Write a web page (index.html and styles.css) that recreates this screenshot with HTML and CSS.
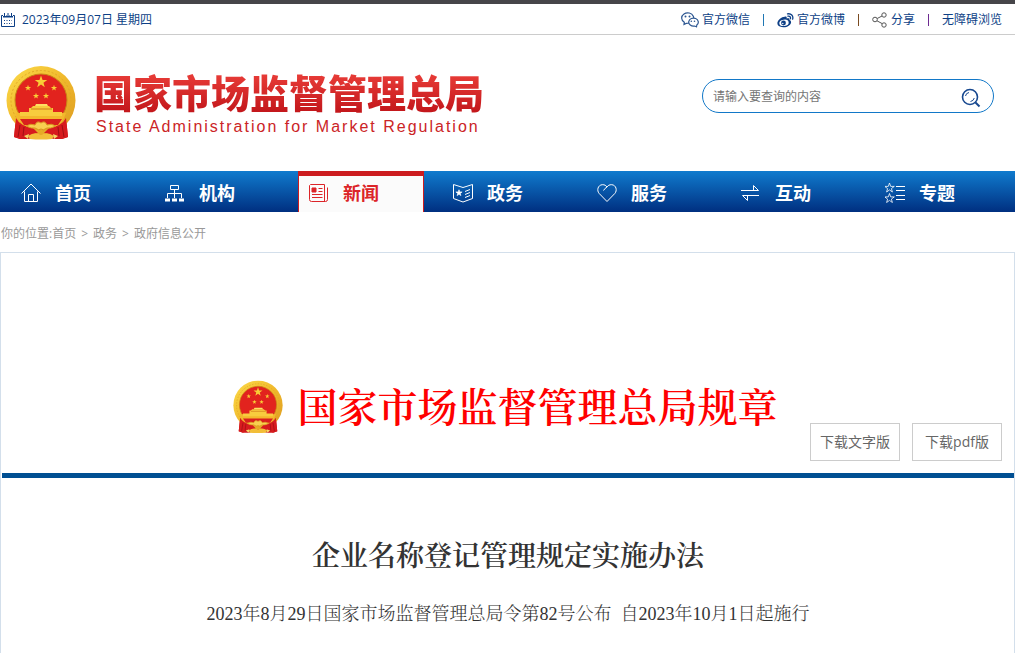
FILE: index.html
```html
<!DOCTYPE html>
<html lang="zh-CN">
<head>
    <meta charset="UTF-8">
    <meta name="viewport" content="width=device-width, initial-scale=1.0">
    <title>企业名称登记管理规定实施办法</title>
    <link rel="stylesheet" href="styles.css">
</head>
<body>
    <!-- shared emblem, used in the header and above the document -->
    <svg class="defs" width="0" height="0" aria-hidden="true">
        <defs>
            <linearGradient id="gold" x1="0" y1="0" x2="1" y2="1">
                <stop offset="0" stop-color="#fcdc4a"/>
                <stop offset="0.5" stop-color="#f0b92c"/>
                <stop offset="1" stop-color="#dc9a20"/>
            </linearGradient>
            <polygon id="star" points="0,-5 1.2,-1.6 4.8,-1.6 1.9,0.6 2.9,4 0,1.9 -2.9,4 -1.9,0.6 -4.8,-1.6 -1.2,-1.6"/>
            <symbol id="emblem" viewBox="0 0 70 74">
                <path d="M10 52 L8 71 L14 73 L22 73 L35 70 L48 73 L56 73 L62 71 L60 52Z" fill="#cf1a1c"/>
                <circle cx="35" cy="34.500" r="34.500" fill="url(#gold)"/>
                <circle cx="35" cy="34.500" r="30" fill="none" stroke="#e3a826" stroke-width="1" stroke-dasharray="2 2"/>
                <circle cx="35" cy="34" r="26" fill="#e2231e" stroke="#c98516" stroke-width="1"/>
                <path d="M10 47 H60 Q57 57 49 62 H21 Q13 57 10 47Z" fill="#f4b72d"/>
                <path d="M14 53 H56 L52 59 H18Z" fill="#d9201d"/>
                <path d="M23 46 V42 H25 L27 40 H43 L45 42 H47 V46 H56 V50 H14 V46Z" fill="#f8cc3e"/>
                <path d="M29 40 L30 38 H41 L42 40Z" fill="#ffdf62"/>
                <path d="M25 43 H46" stroke="#d07b1b" stroke-width="1"/>
                <use href="#star" transform="translate(35 16) scale(1.3)" fill="#f9cd36"/>
                <use href="#star" transform="translate(22 22) scale(.65)" fill="#f9cd36"/>
                <use href="#star" transform="translate(48 22) scale(.65)" fill="#f9cd36"/>
                <use href="#star" transform="translate(30 30) scale(.65)" fill="#f9cd36"/>
                <use href="#star" transform="translate(40 30) scale(.65)" fill="#f9cd36"/>
                <path d="M10 52 Q14 60 27 62 L32 67 L18 70 L14 73 L8 71Z" fill="#d71b1e"/>
                <path d="M60 52 Q56 60 43 62 L38 67 L52 70 L56 73 L62 71Z" fill="#d71b1e"/>
                <path d="M14 59 L12 71 M18 61 L17 70 M56 59 L58 71 M52 61 L53 70" stroke="#9e1014" stroke-width="1"/>
                <path d="M20 60 Q25 57 29 59 Q31 54 35 57 Q39 54 41 59 Q45 57 50 60 Q44 63 41 62 Q37 65 35 63 Q33 65 29 62 Q26 63 20 60Z" fill="#f8d050" stroke="#d99620" stroke-width="1"/>
                <path d="M22 70 Q29 65 35 69 Q41 65 48 70 L46 73 Q35 74 24 73Z" fill="#f2be38"/>
                <path d="M18 70 L23 68 L22 73Z M52 70 L47 68 L48 73Z" fill="#f6d667"/>
            </symbol>
        </defs>
    </svg>

    <div class="topbar">
        <div class="topbar-date">
            <svg width="14" height="14" viewBox="0 0 14 14" fill="none" stroke="#0d3f86">
                <path d="M.5 2.500H13.500V13.500H.5Z"/>
                <path d="M2 3.500H12" stroke-width="2"/>
                <path d="M3.500 0V3M7 0V3M10.500 0V3" stroke="#fff" stroke-width="3"/>
                <path d="M3.500 0V4M7 0V4M10.500 0V4"/>
                <path d="M3 7.500H11M3 10.500H11" stroke-dasharray="1 1.500"/>
            </svg>
            <span>2023年09月07日 星期四</span>
        </div>
        <div class="topbar-links">
            <a href="#">
                <svg width="18" height="16" viewBox="0 0 18 16" fill="#fff" stroke="#2c5691" stroke-width="1.200">
                    <path d="M3 12.500L3.300 10.300A6 5.200 0 1 1 7 11.200C5.500 11.200 4.500 11.700 3 12.500Z"/>
                    <path d="M15.500 14.800L13.500 14A4.800 4 0 1 1 15.800 13Z"/>
                    <g fill="#2c5691" stroke="none">
                        <circle cx="4.500" cy="4.500" r="1"/><circle cx="8.500" cy="4.500" r="1"/>
                        <circle cx="10.300" cy="9.300" r=".8"/><circle cx="13.500" cy="9.300" r=".8"/>
                    </g>
                </svg>
                <span>官方微信</span>
            </a>
            <span class="sep sep-blue"></span>
            <a href="#">
                <svg width="17" height="15" viewBox="0 0 17 15">
                    <path d="M6.500 4C8.700 2.800 10.200 3.400 9.600 5.400C12 4.700 13 5.500 12.300 7C14.500 7.700 14.600 9.800 13 11.700C10.800 14.200 6 15 3 13.600C-.4 12.200-.2 9 2 6.700C3.300 5.300 4.800 4.300 6.500 4Z" fill="#0d3f86"/>
                    <ellipse cx="7" cy="9.800" rx="4.700" ry="3.200" fill="#fff" transform="rotate(-8 7 9.800)"/>
                    <circle cx="6.500" cy="10" r="2.400" fill="#0d3f86"/>
                    <circle cx="5.800" cy="10.500" r=".7" fill="#fff"/>
                    <path d="M10.500.9C14 .1 16.700 3 15.600 6.200M10.900 3.200C12.800 2.900 13.900 4.200 13.400 5.800" fill="none" stroke="#0d3f86" stroke-width="1.300" stroke-linecap="round"/>
                </svg>
                <span>官方微博</span>
            </a>
            <span class="sep sep-brown"></span>
            <a href="#">
                <svg width="16" height="16" viewBox="0 0 16 16" fill="none" stroke="#555">
                    <circle cx="3" cy="7.500" r="2.300"/>
                    <circle cx="12" cy="3" r="2.200"/>
                    <circle cx="12" cy="13" r="2.200"/>
                    <path d="M5.200 6.500L10 4M5 8.800L10.300 11.700"/>
                </svg>
                <span>分享</span>
            </a>
            <span class="sep sep-purple"></span>
            <a href="#">无障碍浏览</a>
        </div>
    </div>

    <header class="header">
        <a class="logo" href="#">
            <svg class="logo-emblem" viewBox="0 0 70 74" aria-hidden="true"><use href="#emblem"/></svg>
            <span class="logo-text">
                <span class="logo-cn">国家市场监督管理总局</span>
                <span class="logo-en">State Administration for Market Regulation</span>
            </span>
        </a>
        <form class="search">
            <input type="text" aria-label="搜索" placeholder="请输入要查询的内容">
            <button type="button" aria-label="查询">
                <svg width="20" height="20" viewBox="0 0 20 20" fill="none" stroke="#17488f">
                    <circle cx="9" cy="9" r="7.500" stroke-width="1.600"/>
                    <path d="M14.500 14.500L18.500 18.500" stroke-width="2"/>
                    <path d="M4.500 8Q5 5 8 4.500M9.500 13.500Q12.500 13 13.300 10" stroke-width="1"/>
                </svg>
            </button>
        </form>
    </header>

    <nav class="nav">
        <a href="#">
            <svg viewBox="0 0 20 20"><path d="M.5 10.500L10 1L19.500 10.500M3.500 8.500V18.500H16.500V8.500M7.500 18V11.500H12.500V18"/></svg>
            <span>首页</span>
        </a>
        <a href="#">
            <svg viewBox="0 0 20 20"><path d="M5.500 2.500H13.500V6.500H5.500ZM9.500 6.500V10.500M2.500 15V10.500H16.500V15M9.500 10.500V15"/><path d="M0 17H5M7 17H12M14 17H19" stroke-width="3"/></svg>
            <span>机构</span>
        </a>
        <a class="active" href="#">
            <svg viewBox="0 0 20 20"><path d="M1.500 1.500H15.500V18.500H2.500Q.5 18.500 .5 16.500V2.500ZM18.500 4.500V16.500Q18.500 18.500 16.500 18.500H14M9.500 5.500H13.500M9.500 8.500H13.500M3 11.500H13.500M3 14.500H13.500"/><path d="M3 5H7V9H3Z" fill="currentColor"/></svg>
            <span>新闻</span>
        </a>
        <a href="#">
            <svg viewBox="0 0 20 20"><path d="M.5 1.500L10 4.500L19.500 1.500V15.500L10 19L.5 15.500ZM12 8.500L17 6.500M12 11.500L17 9.500M12 14.500L17 12.500"/><use href="#star" transform="translate(6 10) scale(.65)" fill="currentColor"/></svg>
            <span>政务</span>
        </a>
        <a href="#">
            <svg viewBox="0 0 20 20"><path d="M10 18.500L2.200 10.500C-.5 7.500 .8 2 5.300 1.700C7.600 1.600 9.100 2.500 10 4C10.900 2.500 12.400 1.600 14.700 1.700C19.200 2 20.500 7.500 17.800 10.500ZM10 4Q8 5 6.500 7.500"/></svg>
            <span>服务</span>
        </a>
        <a href="#">
            <svg viewBox="0 0 20 20"><path d="M0 7.500H17.500L12.500 2.500V7M18 12.500H1.500L6.500 17.500V13"/></svg>
            <span>互动</span>
        </a>
        <a href="#">
            <svg viewBox="0 0 20 20"><use href="#star" transform="translate(4.500 5)" stroke-width=".8"/><use href="#star" transform="translate(4.500 15.500)" stroke-width=".8"/><path d="M11 3.500H20M11 7.500H20M11 12.500H20M11 16.500H20"/></svg>
            <span>专题</span>
        </a>
    </nav>

    <div class="breadcrumb">
        <span>你的位置:<a href="#">首页</a></span>
        <span>&gt;</span>
        <a href="#">政务</a>
        <span>&gt;</span>
        <a href="#">政府信息公开</a>
    </div>

    <main class="content">
        <div class="banner">
            <div class="banner-title">
                <svg class="banner-emblem" viewBox="0 0 70 74" aria-hidden="true"><use href="#emblem"/></svg>
                <h2>国家市场监督管理总局规章</h2>
            </div>
            <div class="downloads">
                <a href="#">下载文字版</a>
                <a href="#">下载pdf版</a>
            </div>
        </div>
        <article class="article">
            <h1>企业名称登记管理规定实施办法</h1>
            <p>2023年8月29日国家市场监督管理总局令第82号公布&nbsp; 自2023年10月1日起施行</p>
        </article>
    </main>
</body>
</html>
```
FILE: styles.css
```css
* {
    box-sizing: border-box;
}
body {
    margin: 0;
    background-color: #fff;
    color: #333;
    font-family: "Open Sans", "Noto Sans CJK SC", sans-serif;
    font-size: 12px;
    line-height: 20px;
}
a {
    color: inherit;
    text-decoration: none;
}
svg {
    display: block;
    flex-shrink: 0;
}
.defs {
    position: absolute;
}

/* Top bar */
.topbar {
    display: flex;
    justify-content: space-between;
    align-items: center;
    height: 35px;
    padding: 2px 13px 0 1px;
    border-top: 4px solid #464549;
    border-bottom: 1px solid #ccc;
    color: #0d3f86;
}
.topbar-date {
    display: flex;
    align-items: center;
    gap: 7px;
}
.topbar-links {
    display: flex;
    align-items: center;
    gap: 13px;
}
.topbar-links a {
    display: flex;
    align-items: center;
    gap: 3px;
}
.sep {
    width: 1px;
    height: 12px;
}
.sep-blue {
    background-color: #1f77b4;
}
.sep-brown {
    background-color: #7a4a20;
}
.sep-purple {
    background-color: #6d2a91;
}

/* Header */
.header {
    display: flex;
    justify-content: space-between;
    align-items: flex-start;
    padding: 31px 21px 31px 6px;
}
.logo {
    display: flex;
    gap: 18px;
}
.logo-emblem {
    width: 70px;
    height: 74px;
}
.logo-text {
    display: flex;
    flex-direction: column;
    gap: 2px;
}
.logo-cn {
    font-family: "Noto Sans CJK SC", sans-serif;
    font-size: 39px;
    font-weight: 900;
    line-height: 50px;
    color: transparent;
    background: linear-gradient(#e63a36 20%, #c4181c 90%);
    -webkit-background-clip: text;
    background-clip: text;
}
.logo-en {
    padding-left: 2px;
    font-family: "Liberation Sans", sans-serif;
    font-size: 16px;
    line-height: 18px;
    letter-spacing: 2px;
    color: #cb2426;
}
.search {
    display: flex;
    align-items: center;
    width: 292px;
    height: 34px;
    margin-top: 13px;
    padding: 2px 12px 0 10px;
    border: 1px solid #1278c8;
    border-radius: 17px;
}
.search input {
    flex: 1;
    min-width: 0;
    padding: 0;
    border: none;
    outline: none;
    background: none;
    font: inherit;
}
.search input::placeholder {
    color: #757575;
}
.search button {
    padding: 1px 0 0;
    border: none;
    background: none;
    cursor: pointer;
}

/* Main navigation */
.nav {
    display: flex;
    gap: 18px;
    height: 41px;
    padding-left: 10px;
    background: linear-gradient(#107bce, #002f80);
}
.nav a {
    display: flex;
    align-items: center;
    gap: 14px;
    width: 126px;
    padding-left: 11px;
    padding-top: 2px;
    color: #fff;
    font-size: 18px;
    font-weight: bold;
}
.nav a.active {
    padding: 0 0 2px 10px;
    border: 1px solid #cc1c1f;
    border-top-width: 5px;
    border-bottom: none;
    background-color: #fbfbfb;
    color: #dc2428;
}
.nav svg {
    width: 20px;
    height: 20px;
    fill: none;
    stroke: currentColor;
    stroke-width: 1;
}

.breadcrumb {
    display: flex;
    gap: 5px;
    padding: 12px 1px 8px;
    color: #999;
}

/* Document */
.content {
    padding-left: 1px;
    border: 1px solid #d3dfeb;
}
.banner {
    display: grid;
    padding: 120px 12px 12px;
    border-bottom: 5px solid #004f92;
}
.banner-title {
    grid-area: 1 / 1;
    justify-self: center;
    display: flex;
    align-items: center;
    gap: 15px;
    height: 68px;
    padding-right: 6px;
}
.banner-emblem {
    width: 50px;
    height: 54px;
}
.banner-title h2 {
    margin: 0;
    padding-bottom: 5px;
    color: #f00;
    font-family: "Noto Serif CJK SC", "Noto Sans CJK SC", serif;
    font-size: 40px;
    font-weight: 600;
    line-height: 54px;
}
.downloads {
    grid-area: 1 / 1;
    justify-self: end;
    align-self: end;
    display: flex;
    gap: 12px;
    margin-top: 50px;
}
.downloads a {
    width: 90px;
    height: 38px;
    border: 1px solid #ccc;
    background-color: #fff;
    color: #666;
    font-size: 14px;
    line-height: 36px;
    text-align: center;
}
.article {
    padding: 55px 20px 30px;
    text-align: center;
}
.article h1 {
    margin: 0 0 25px;
    font-family: "Noto Serif CJK SC", "Noto Sans CJK SC", serif;
    font-size: 28px;
    font-weight: 600;
    line-height: 42px;
}
.article p {
    margin: 0;
    font-family: "Liberation Serif", "Noto Serif CJK SC", "Noto Sans CJK SC", serif;
    font-size: 18px;
    font-weight: 300;
    line-height: 28px;
}
```
